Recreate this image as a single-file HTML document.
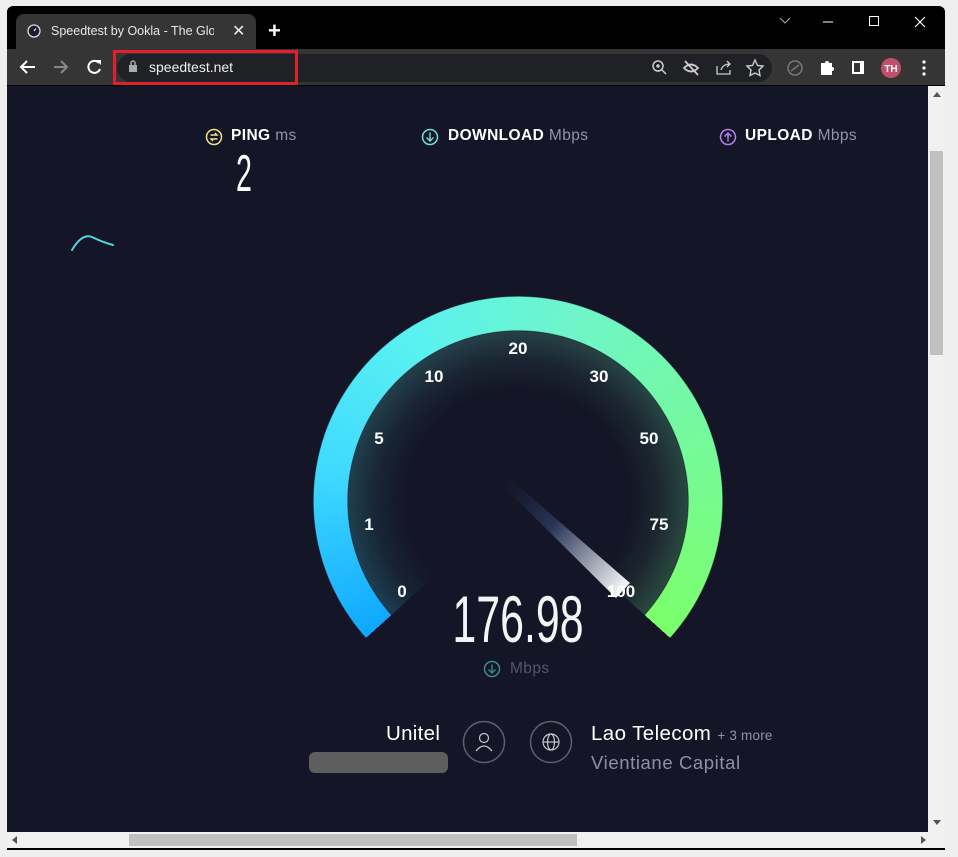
<!DOCTYPE html>
<html><head><meta charset="utf-8"><style>
*{margin:0;padding:0;box-sizing:border-box}
body{width:958px;height:857px;background:#efefef;font-family:"Liberation Sans",sans-serif;position:relative;overflow:hidden}
.abs{position:absolute}
.win{left:7px;top:6px;width:938px;height:844px;background:#000;border-radius:6px 6px 0 0;overflow:hidden}
.tab{left:16px;top:14px;width:240px;height:35px;background:#353535;border-radius:8px 8px 0 0;color:#e8e8e8;font-size:12.5px;overflow:hidden}
.toolbar{left:7px;top:49px;width:938px;height:36px;background:#353535}
.omni{left:117px;top:54px;width:655px;height:28px;background:#202124;border-radius:14px}
.content{left:7px;top:86px;width:921px;height:746px;background:#141526;overflow:hidden}
.lbl{color:#fff;font-weight:bold;font-size:15.5px;letter-spacing:0.4px}
.unit{color:#9193a8;font-weight:normal}
.num{color:#fff;font-weight:bold;font-size:17px;position:absolute;transform:translate(-50%,-50%)}
</style></head><body>
<div class="abs win"></div>
<div class="abs tab">
 <svg class="abs" style="left:11px;top:10px" width="14" height="14" viewBox="0 0 14 14"><circle cx="7" cy="7" r="6" fill="#1c1d2e" stroke="#ddd" stroke-width="1.3"/><path d="M7 7 L9 4.5" stroke="#ddd" stroke-width="1.3"/></svg>
 <span class="abs" style="left:35px;top:10px;white-space:nowrap;width:163px;overflow:hidden">Speedtest by Ookla - The Global</span>
 <span class="abs" style="left:216px;top:7px;font-size:16px">✕</span>
</div>
<span class="abs" style="left:268px;top:18px;color:#fff;font-size:22px;font-weight:bold">+</span>
<svg class="abs" style="left:778px;top:14px" width="160" height="16" viewBox="0 0 160 16"><path d="M2 4 L7 9 L12 4" stroke="#aaa" fill="none"/><path d="M45 8 H55" stroke="#fff"/><rect x="91.5" y="2.5" width="9" height="9" stroke="#fff" fill="none"/><path d="M137 3 L147 13 M147 3 L137 13" stroke="#fff" stroke-width="1.2"/></svg>
<div class="abs toolbar"></div>
<svg class="abs" style="left:18px;top:57px" width="90" height="20" viewBox="0 0 90 20"><path d="M17 10 H4 M9 4 L3 10 L9 16" stroke="#fff" stroke-width="2" fill="none"/><path d="M36 10 H49 M43 4 L49 10 L43 16" stroke="#888" stroke-width="2" fill="none"/><path d="M81 6 A6 6 0 1 0 82 12" stroke="#fff" stroke-width="2" fill="none"/><path d="M78 3 L83 3 L83 8 Z" fill="#fff"/></svg>
<div class="abs omni"></div>
<div class="abs" style="left:113px;top:50px;width:185px;height:35px;border:3px solid #e0202a"></div>
<svg class="abs" style="left:128px;top:60px" width="10" height="12" viewBox="0 0 10 12"><rect x="1" y="5" width="8" height="7" fill="#aaa"/><path d="M3 5 V3 A2 2 0 0 1 7 3 V5" stroke="#aaa" stroke-width="1.5" fill="none"/></svg>
<span class="abs" style="left:149px;top:59px;color:#eee;font-size:14px">speedtest.net</span>
<svg class="abs" style="left:650px;top:58px" width="290" height="20" viewBox="0 0 290 20"><circle cx="8" cy="8" r="5" stroke="#ccc" stroke-width="1.5" fill="none"/><path d="M12 12 L16 16 M6 8 H10 M8 6 V10" stroke="#ccc" stroke-width="1.5"/><path d="M34 10 Q41 3 48 10 Q41 17 34 10Z" stroke="#ccc" stroke-width="1.8" fill="none"/><path d="M35 3 L48 17" stroke="#ccc" stroke-width="1.8"/><path d="M67 8 V16 H80 V12 M71 12 Q73 6 80 6 M77 3 L80 6 L77 9" stroke="#ccc" stroke-width="1.3" fill="none"/><path d="M105 2 L107.5 7.5 L113 8 L109 12 L110 17.5 L105 15 L100 17.5 L101 12 L97 8 L102.5 7.5Z" stroke="#ccc" stroke-width="1.4" fill="none"/><circle cx="145" cy="10" r="7" stroke="#777" stroke-width="1.5" fill="none"/><path d="M141 13 L149 7" stroke="#777" stroke-width="1.5"/><path d="M171 5 H175 A2 2 0 0 1 179 5 H182 V9 A2 2 0 0 1 182 13 V17 H171Z" fill="#fff"/><rect x="202" y="3" width="12" height="13" fill="#fff"/><rect x="204" y="5" width="6" height="9" fill="#353535"/><circle cx="241" cy="10" r="10" fill="#c0506a"/><text x="241" y="14" font-size="10" font-weight="bold" fill="#fff" text-anchor="middle" font-family="Liberation Sans">TH</text><circle cx="274" cy="4" r="1.6" fill="#fff"/><circle cx="274" cy="10" r="1.6" fill="#fff"/><circle cx="274" cy="16" r="1.6" fill="#fff"/></svg>
<div class="abs content"></div>
<div class="abs" style="left:928px;top:86px;width:17px;height:746px;background:#f1f1f1"></div>
<div class="abs" style="left:930px;top:151px;width:13px;height:204px;background:#c1c1c1"></div>
<div class="abs" style="left:933px;top:92px;width:0;height:0;border:4px solid transparent;border-bottom:5px solid #555;border-top:0"></div>
<div class="abs" style="left:933px;top:820px;width:0;height:0;border:4px solid transparent;border-top:5px solid #555;border-bottom:0"></div>
<div class="abs" style="left:7px;top:832px;width:938px;height:16px;background:#f1f1f1"></div>
<div class="abs" style="left:129px;top:834px;width:448px;height:12px;background:#c1c1c1"></div>
<div class="abs" style="left:12px;top:836px;width:0;height:0;border:4px solid transparent;border-right:5px solid #555;border-left:0"></div>
<div class="abs" style="left:921px;top:836px;width:0;height:0;border:4px solid transparent;border-left:5px solid #555;border-right:0"></div>

<svg class="abs" style="left:205px;top:128px" width="18" height="18" viewBox="0 0 18 18"><circle cx="9" cy="9" r="7.5" stroke="#f2e38a" stroke-width="1.5" fill="none"/><path d="M5.5 7 H12 L10 5 M12.5 11 H6 L8 13" stroke="#f2e38a" stroke-width="1.4" fill="none"/></svg>
<div class="abs lbl" style="left:231px;top:127px">PING <span class="unit">ms</span></div>
<div class="abs" style="left:236px;top:146px;color:#fff;font-size:52px;font-weight:300;transform:scaleX(0.55);transform-origin:left top;line-height:56px">2</div>
<svg class="abs" style="left:421px;top:128px" width="18" height="18" viewBox="0 0 18 18"><circle cx="9" cy="9" r="7.5" stroke="#6ee1d6" stroke-width="1.5" fill="none"/><path d="M9 4.5 V13 M5.5 9.5 L9 13 L12.5 9.5" stroke="#6ee1d6" stroke-width="1.4" fill="none"/></svg>
<div class="abs lbl" style="left:448px;top:127px">DOWNLOAD <span class="unit">Mbps</span></div>
<svg class="abs" style="left:719px;top:128px" width="18" height="18" viewBox="0 0 18 18"><circle cx="9" cy="9" r="7.5" stroke="#b77ff0" stroke-width="1.5" fill="none"/><path d="M9 13.5 V5 M5.5 8.5 L9 5 L12.5 8.5" stroke="#b77ff0" stroke-width="1.4" fill="none"/></svg>
<div class="abs lbl" style="left:745px;top:127px">UPLOAD <span class="unit">Mbps</span></div>
<svg class="abs" style="left:60px;top:225px" width="70" height="40" viewBox="0 0 70 40"><path d="M12 25 Q22 8 32 12 Q42 17 53 20" stroke="#4fd6de" stroke-width="2" fill="none" stroke-linecap="round"/></svg>

<div class="abs" style="left:313px;top:296px;width:410px;height:410px;border-radius:50%;background:conic-gradient(from 228deg,#0fa8ff 0deg,#3fd9ff 50deg,#5af2f0 100deg,#6ff5c8 150deg,#76fa96 210deg,#7bff6a 264deg,transparent 264deg);-webkit-mask:radial-gradient(circle,transparent 170px,#000 171px,#000 204px,transparent 205px);mask:radial-gradient(circle,transparent 170px,#000 171px,#000 204px,transparent 205px)"></div>
<div class="abs" style="left:348px;top:331px;width:340px;height:340px;border-radius:50%;background:conic-gradient(from 228deg,rgba(30,80,100,.7) 0deg,rgba(40,70,75,.9) 130deg,rgba(45,80,65,.9) 264deg,transparent 264deg);-webkit-mask:radial-gradient(circle,transparent 110px,rgba(0,0,0,.35) 140px,#000 170px);mask:radial-gradient(circle,transparent 110px,rgba(0,0,0,.35) 140px,#000 170px)"></div>
<svg class="abs" style="left:300px;top:280px" width="440" height="420" viewBox="0 0 440 420"><defs><linearGradient id="nd" x1="200" y1="207" x2="325" y2="313" gradientUnits="userSpaceOnUse"><stop offset="0" stop-color="#1e2a48" stop-opacity="0"/><stop offset=".4" stop-color="#2a3556"/><stop offset="1" stop-color="#fff"/></linearGradient></defs><polygon points="200,203 207,196 330,303 316,318" fill="url(#nd)"/></svg>
<span class="num" style="left:402px;top:592px">0</span>
<span class="num" style="left:369px;top:525px">1</span>
<span class="num" style="left:379px;top:439px">5</span>
<span class="num" style="left:434px;top:377px">10</span>
<span class="num" style="left:518px;top:349px">20</span>
<span class="num" style="left:599px;top:377px">30</span>
<span class="num" style="left:649px;top:439px">50</span>
<span class="num" style="left:659px;top:525px">75</span>
<span class="num" style="left:621px;top:592px">100</span>
<div class="abs" style="left:518px;top:584px;color:#f4f4f4;font-size:66px;font-weight:300;line-height:70px;transform:translateX(-50%) scaleX(0.65);white-space:nowrap">176.98</div>
<svg class="abs" style="left:483px;top:660px" width="18" height="18" viewBox="0 0 18 18"><circle cx="9" cy="9" r="7.5" stroke="#3a8b8a" stroke-width="1.5" fill="none"/><path d="M9 4.5 V13 M5.5 9.5 L9 13 L12.5 9.5" stroke="#3a8b8a" stroke-width="1.4" fill="none"/></svg>
<span class="abs" style="left:510px;top:660px;color:#54566e;font-size:15.5px;letter-spacing:0.4px">Mbps</span>

<span class="abs" style="left:386px;top:722px;color:#fff;font-size:20.5px;letter-spacing:0.3px">Unitel</span>
<div class="abs" style="left:309px;top:752px;width:139px;height:21px;background:#5e5e5e;border-radius:6px"></div>
<svg class="abs" style="left:462px;top:720px" width="44" height="44" viewBox="0 0 44 44"><circle cx="22" cy="22" r="20.5" stroke="#5d5f75" stroke-width="1.5" fill="none"/><circle cx="22" cy="18" r="4.5" stroke="#c8c8d0" stroke-width="1.2" fill="none"/><path d="M14 31 Q22 21 30 31" stroke="#c8c8d0" stroke-width="1.2" fill="none"/></svg>
<svg class="abs" style="left:529px;top:720px" width="44" height="44" viewBox="0 0 44 44"><circle cx="22" cy="22" r="20.5" stroke="#5d5f75" stroke-width="1.5" fill="none"/><circle cx="22" cy="22" r="8" stroke="#c8c8d0" stroke-width="1.2" fill="none"/><ellipse cx="22" cy="22" rx="3.5" ry="8" stroke="#c8c8d0" stroke-width="1.2" fill="none"/><path d="M14 22 H30" stroke="#c8c8d0" stroke-width="1.2"/></svg>
<span class="abs" style="left:591px;top:722px;color:#fff;font-size:20.5px;letter-spacing:0.4px">Lao Telecom <span style="font-size:13.5px;color:#9193a8;letter-spacing:0.2px">+ 3 more</span></span>
<span class="abs" style="left:591px;top:752px;color:#8e90a6;font-size:18.5px;letter-spacing:0.6px">Vientiane Capital</span>
</body></html>
